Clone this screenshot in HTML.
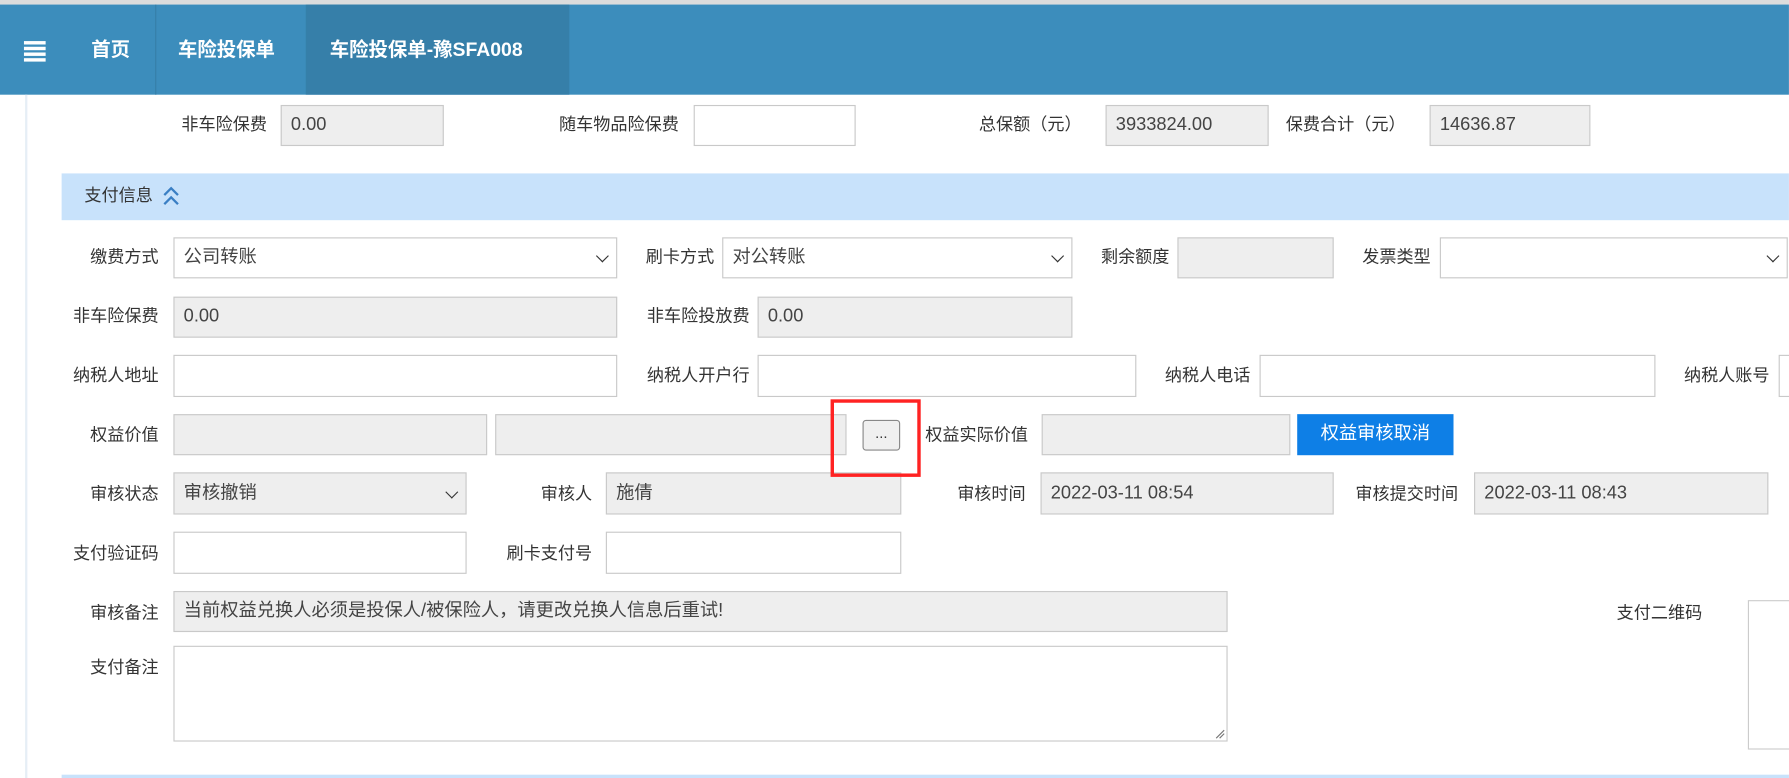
<!DOCTYPE html>
<html><head><meta charset="utf-8">
<style>
html,body{margin:0;padding:0;width:1789px;height:778px;overflow:hidden;background:#fff;}
#w{position:absolute;left:0;top:0;width:1568px;height:682px;transform:scale(1.1409);transform-origin:0 0;font-family:"Liberation Sans","Noto Sans CJK SC",sans-serif;color:#333;}
.a{position:absolute;}
.l{position:absolute;font-size:15px;text-align:right;white-space:nowrap;line-height:20px;}
.i{position:absolute;box-sizing:border-box;border:1px solid #c9c9c9;background:#fff;font-size:16px;color:#444;padding-left:8px;white-space:nowrap;}
.g{background:#eeeeee;}
.sel:after{content:"";position:absolute;right:8px;top:50%;width:7px;height:7px;border-right:1.5px solid #333;border-bottom:1.5px solid #333;transform:translateY(-70%) rotate(45deg);}
.tab{position:absolute;top:4px;height:79px;line-height:79px;color:#fff;font-weight:bold;font-size:17px;}
</style></head><body><div id="w">
<div class="a" style="left:0;top:0;width:1568px;height:4px;background:#dcdcdc"></div>
<div class="a" style="left:0;top:4px;width:1568px;height:79px;background:#3c8dbc"></div>
<div class="a" style="left:269px;top:4px;width:230px;height:79px;background:#367fa9"></div>
<div class="a" style="left:136px;top:4px;width:1px;height:79px;background:#357fa8"></div>
<div class="a" style="left:268px;top:4px;width:1px;height:79px;background:#357fa8"></div>
<div class="a" style="left:21px;top:36px;width:19px;height:3px;background:#fff;box-shadow:0 5px 0 #fff,0 10px 0 #fff,0 15px 0 #fff"></div>
<div class="tab" style="left:80px">首页</div>
<div class="tab" style="left:156px">车险投保单</div>
<div class="tab" style="left:289px">车险投保单-豫SFA008</div>
<div class="a" style="left:22px;top:83px;width:2px;height:599px;background:#e6eef6"></div>

<div class="l" style="left:120px;width:114px;top:100px">非车险保费</div>
<div class="i g" style="left:246px;top:92px;width:143px;height:36px;line-height:34px">0.00</div>
<div class="l" style="left:440px;width:155px;top:100px">随车物品险保费</div>
<div class="i" style="left:608px;top:92px;width:142px;height:36px"></div>
<div class="l" style="left:820px;width:128px;top:100px">总保额（元）</div>
<div class="i g" style="left:969px;top:92px;width:143px;height:36px;line-height:34px">3933824.00</div>
<div class="l" style="left:1120px;width:112px;top:100px">保费合计（元）</div>
<div class="i g" style="left:1253px;top:92px;width:141px;height:36px;line-height:34px">14636.87</div>

<div class="a" style="left:54px;top:152px;width:1514px;height:41px;background:#c8e2fb"></div>
<div class="l" style="left:74px;top:162px;text-align:left">支付信息</div>
<svg class="a" style="left:142px;top:162px" width="16" height="20" viewBox="0 0 16 20"><path d="M2 9 L8 3 L14 9 M2 17 L8 11 L14 17" fill="none" stroke="#3a7fc4" stroke-width="2"/></svg>

<div class="l" style="left:40px;width:99px;top:216px">缴费方式</div>
<div class="i sel" style="left:152px;top:208px;width:389px;height:36px;line-height:34px">公司转账</div>
<div class="l" style="left:550px;width:76px;top:216px">刷卡方式</div>
<div class="i sel" style="left:633px;top:208px;width:307px;height:36px;line-height:34px">对公转账</div>
<div class="l" style="left:950px;width:75px;top:216px">剩余额度</div>
<div class="i g" style="left:1032px;top:208px;width:137px;height:36px"></div>
<div class="l" style="left:1180px;width:74px;top:216px">发票类型</div>
<div class="i sel" style="left:1262px;top:208px;width:305px;height:36px"></div>

<div class="l" style="left:40px;width:99px;top:268px">非车险保费</div>
<div class="i g" style="left:152px;top:260px;width:389px;height:36px;line-height:34px">0.00</div>
<div class="l" style="left:550px;width:107px;top:268px">非车险投放费</div>
<div class="i g" style="left:664px;top:260px;width:276px;height:36px;line-height:34px">0.00</div>

<div class="l" style="left:40px;width:99px;top:320px">纳税人地址</div>
<div class="i" style="left:152px;top:311px;width:389px;height:37px"></div>
<div class="l" style="left:550px;width:107px;top:320px">纳税人开户行</div>
<div class="i" style="left:664px;top:311px;width:332px;height:37px"></div>
<div class="l" style="left:1000px;width:96px;top:320px">纳税人电话</div>
<div class="i" style="left:1104px;top:311px;width:347px;height:37px"></div>
<div class="l" style="left:1460px;width:91px;top:320px">纳税人账号</div>
<div class="i" style="left:1559px;top:311px;width:20px;height:37px"></div>

<div class="l" style="left:40px;width:99px;top:372px">权益价值</div>
<div class="i g" style="left:152px;top:363px;width:275px;height:36px"></div>
<div class="i g" style="left:434px;top:363px;width:308px;height:36px"></div>
<div class="a" style="left:756px;top:368px;width:33px;height:27px;box-sizing:border-box;border:1px solid #888;border-radius:3px;background:#f0f0f0;font-size:13px;text-align:center;line-height:22px">...</div>
<div class="l" style="left:811px;top:372px;text-align:left">权益实际价值</div>
<div class="i g" style="left:913px;top:363px;width:218px;height:36px"></div>
<div class="a" style="left:1137px;top:363px;width:137px;height:36px;background:#0e7fe6;color:#fff;font-size:16px;text-align:center;line-height:36px">权益审核取消</div>

<div class="l" style="left:40px;width:99px;top:424px">审核状态</div>
<div class="i g sel" style="left:152px;top:414px;width:257px;height:37px;line-height:35px">审核撤销</div>
<div class="l" style="left:440px;width:79px;top:424px">审核人</div>
<div class="i g" style="left:531px;top:414px;width:259px;height:37px;line-height:35px">施倩</div>
<div class="l" style="left:800px;width:99px;top:424px">审核时间</div>
<div class="i g" style="left:912px;top:414px;width:257px;height:37px;line-height:35px">2022-03-11 08:54</div>
<div class="l" style="left:1175px;width:103px;top:424px">审核提交时间</div>
<div class="i g" style="left:1292px;top:414px;width:258px;height:37px;line-height:35px">2022-03-11 08:43</div>

<div class="a" style="left:728px;top:350px;width:79px;height:68px;box-sizing:border-box;border:3px solid #f22;z-index:5"></div>

<div class="l" style="left:40px;width:99px;top:476px">支付验证码</div>
<div class="i" style="left:152px;top:466px;width:257px;height:37px"></div>
<div class="l" style="left:430px;width:89px;top:476px">刷卡支付号</div>
<div class="i" style="left:531px;top:466px;width:259px;height:37px"></div>

<div class="l" style="left:40px;width:99px;top:528px">审核备注</div>
<div class="i g" style="left:152px;top:518px;width:924px;height:36px;line-height:34px">当前权益兑换人必须是投保人/被保险人，请更改兑换人信息后重试!</div>
<div class="l" style="left:1400px;width:92px;top:528px">支付二维码</div>
<div class="a" style="left:1532px;top:526px;width:40px;height:131px;box-sizing:border-box;border:1px solid #ccc"></div>

<div class="l" style="left:40px;width:99px;top:576px">支付备注</div>
<div class="i" style="left:152px;top:566px;width:924px;height:84px"></div>
<svg class="a" style="left:1064px;top:638px" width="10" height="10"><path d="M2 9 L9 2 M5 9 L9 5" stroke="#777" stroke-width="1"/></svg>

<div class="a" style="left:54px;top:679px;width:1514px;height:3px;background:#c8e2fb"></div>
</div></body></html>
